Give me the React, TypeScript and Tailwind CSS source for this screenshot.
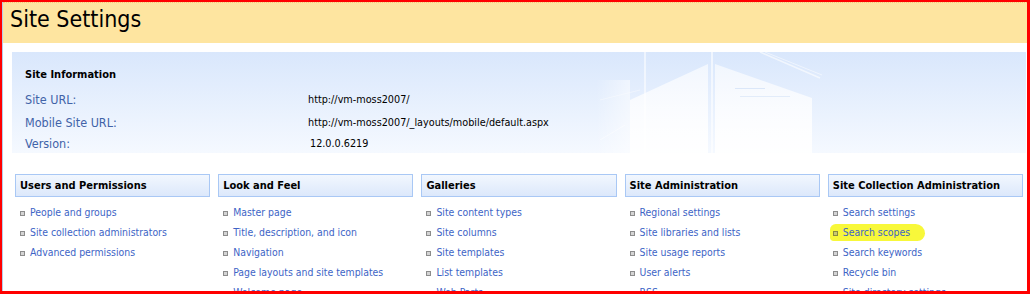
import React from "react";

const font = { fontFamily: '"DejaVu Sans Condensed", "DejaVu Sans", sans-serif' };

const columns: { title: string; items: string[] }[] = [
  { title: "Users and Permissions", items: ["People and groups", "Site collection administrators", "Advanced permissions"] },
  { title: "Look and Feel", items: ["Master page", "Title, description, and icon", "Navigation", "Page layouts and site templates", "Welcome page"] },
  { title: "Galleries", items: ["Site content types", "Site columns", "Site templates", "List templates", "Web Parts"] },
  { title: "Site Administration", items: ["Regional settings", "Site libraries and lists", "Site usage reports", "User alerts", "RSS"] },
  { title: "Site Collection Administration", items: ["Search settings", "Search scopes", "Search keywords", "Recycle bin", "Site directory settings"] },
];

function Building() {
  return (
    <svg className="absolute left-0 top-0 pointer-events-none" width="1014" height="101" viewBox="12 52 1014 101">
      <defs>
        <linearGradient id="fadeL" x1="0" x2="1" y1="0" y2="0">
          <stop offset="0" stopColor="#ffffff" stopOpacity="0" />
          <stop offset="1" stopColor="#ffffff" stopOpacity="0.5" />
        </linearGradient>
        <linearGradient id="blk" x1="0" x2="0" y1="0" y2="1">
          <stop offset="0" stopColor="#ffffff" stopOpacity="0.6" />
          <stop offset="1" stopColor="#ffffff" stopOpacity="0.95" />
        </linearGradient>
      </defs>
      <rect x="596" y="80" width="34" height="73" fill="url(#fadeL)" />
      <polygon points="630,100 708,64 708,153 630,153" fill="url(#blk)" />
      <polygon points="715,64 812,98 812,153 715,153" fill="url(#blk)" />
      <rect x="644" y="52" width="2" height="101" fill="#ffffff" opacity="0.55" />
      <rect x="711" y="52" width="2" height="101" fill="#ffffff" opacity="0.6" />
      <line x1="760" y1="52" x2="820" y2="78" stroke="#ffffff" strokeWidth="1.5" opacity="0.6" />
      <line x1="765" y1="52" x2="822" y2="75" stroke="#ffffff" strokeWidth="1" opacity="0.5" />
      <line x1="600" y1="140" x2="625" y2="125" stroke="#ffffff" strokeWidth="1" opacity="0.5" />
      <line x1="600" y1="100" x2="640" y2="90" stroke="#ffffff" strokeWidth="1" opacity="0.4" />
      <rect x="735" y="88" width="30" height="1" fill="#dbe7f9" />
      <rect x="740" y="96" width="50" height="1" fill="#e2ecfa" />
    </svg>
  );
}

export default function App() {
  return (
    <div className="relative w-[1030px] h-[294px] overflow-hidden bg-white" style={font}>
      <div className="ml-[3px] mr-[3px] mt-[2px] h-[41px] bg-[#fee5a0] border-t border-dotted border-[#f7c77a] pl-[7px] flex items-center">
        <h1 className="text-[23px] leading-none text-black pb-[7px]">Site Settings</h1>
      </div>

      <div className="relative mt-[9px] ml-[12px] mr-[4px] h-[101px] bg-gradient-to-b from-[#d9e7fc] to-[#f5f9ff]">
        <Building />
        <div className="relative pl-[13px] pt-[15px]">
          <div className="text-[11px] font-bold text-black h-[16px] leading-[16px]">Site Information</div>
          <div className="mt-[6px] text-[12.5px]">
            <div className="flex h-[23px] items-center">
              <span className="w-[283px] text-[#4163a8]">Site URL:</span>
              <span className="text-black text-[10.75px]">http://vm-moss2007/</span>
            </div>
            <div className="flex h-[22px] items-center">
              <span className="w-[283px] text-[#4163a8]">Mobile Site URL:</span>
              <span className="text-black text-[10.75px]">http://vm-moss2007/_layouts/mobile/default.aspx</span>
            </div>
            <div className="flex h-[21px] items-center">
              <span className="w-[283px] text-[#4163a8]">Version:</span>
              <span className="text-black text-[10.75px] pl-[2px]">12.0.0.6219</span>
            </div>
          </div>
        </div>
      </div>

      <div className="grid grid-cols-5 gap-x-[8px] ml-[15px] mr-[7px] mt-[21px]">
        {columns.map((col) => (
          <div key={col.title}>
            <div className="h-[23px] border border-[#a9c8f5] bg-gradient-to-b from-[#f2f7fe] to-[#dce8fb] pl-[4px] pt-[1px] flex items-center text-[11px] font-bold text-black">
              {col.title}
            </div>
            <ul className="mt-[6px]">
              {col.items.map((it) => {
                const hl = it === "Search scopes";
                return (
                  <li key={it} className="relative h-[20px] flex items-center pl-[5px] text-[10.4px] text-[#3d64c6]">
                    {hl && (
                      <span className="absolute left-[2px] top-[1px] w-[95px] h-[17px] bg-[#f8f83a] rounded-[6px_10px_8px_4px]" />
                    )}
                    <span className={"relative w-[5px] h-[5px] border mr-[5px] " + (hl ? "border-[#8a8a40] bg-[#c8c870]" : "border-[#8c8c8c] bg-[#d4d4d4]")} />
                    <span className="relative">{it}</span>
                  </li>
                );
              })}
            </ul>
          </div>
        ))}
      </div>

      <div className="absolute inset-0 pointer-events-none border-l-[2px] border-t-[2px] border-r-[3px] border-b-[3px] border-[#ff0000]" />
      <div className="absolute left-[2px] top-[2px] bottom-[3px] w-[1px] bg-[#b7cbe8] pointer-events-none" />
    </div>
  );
}
